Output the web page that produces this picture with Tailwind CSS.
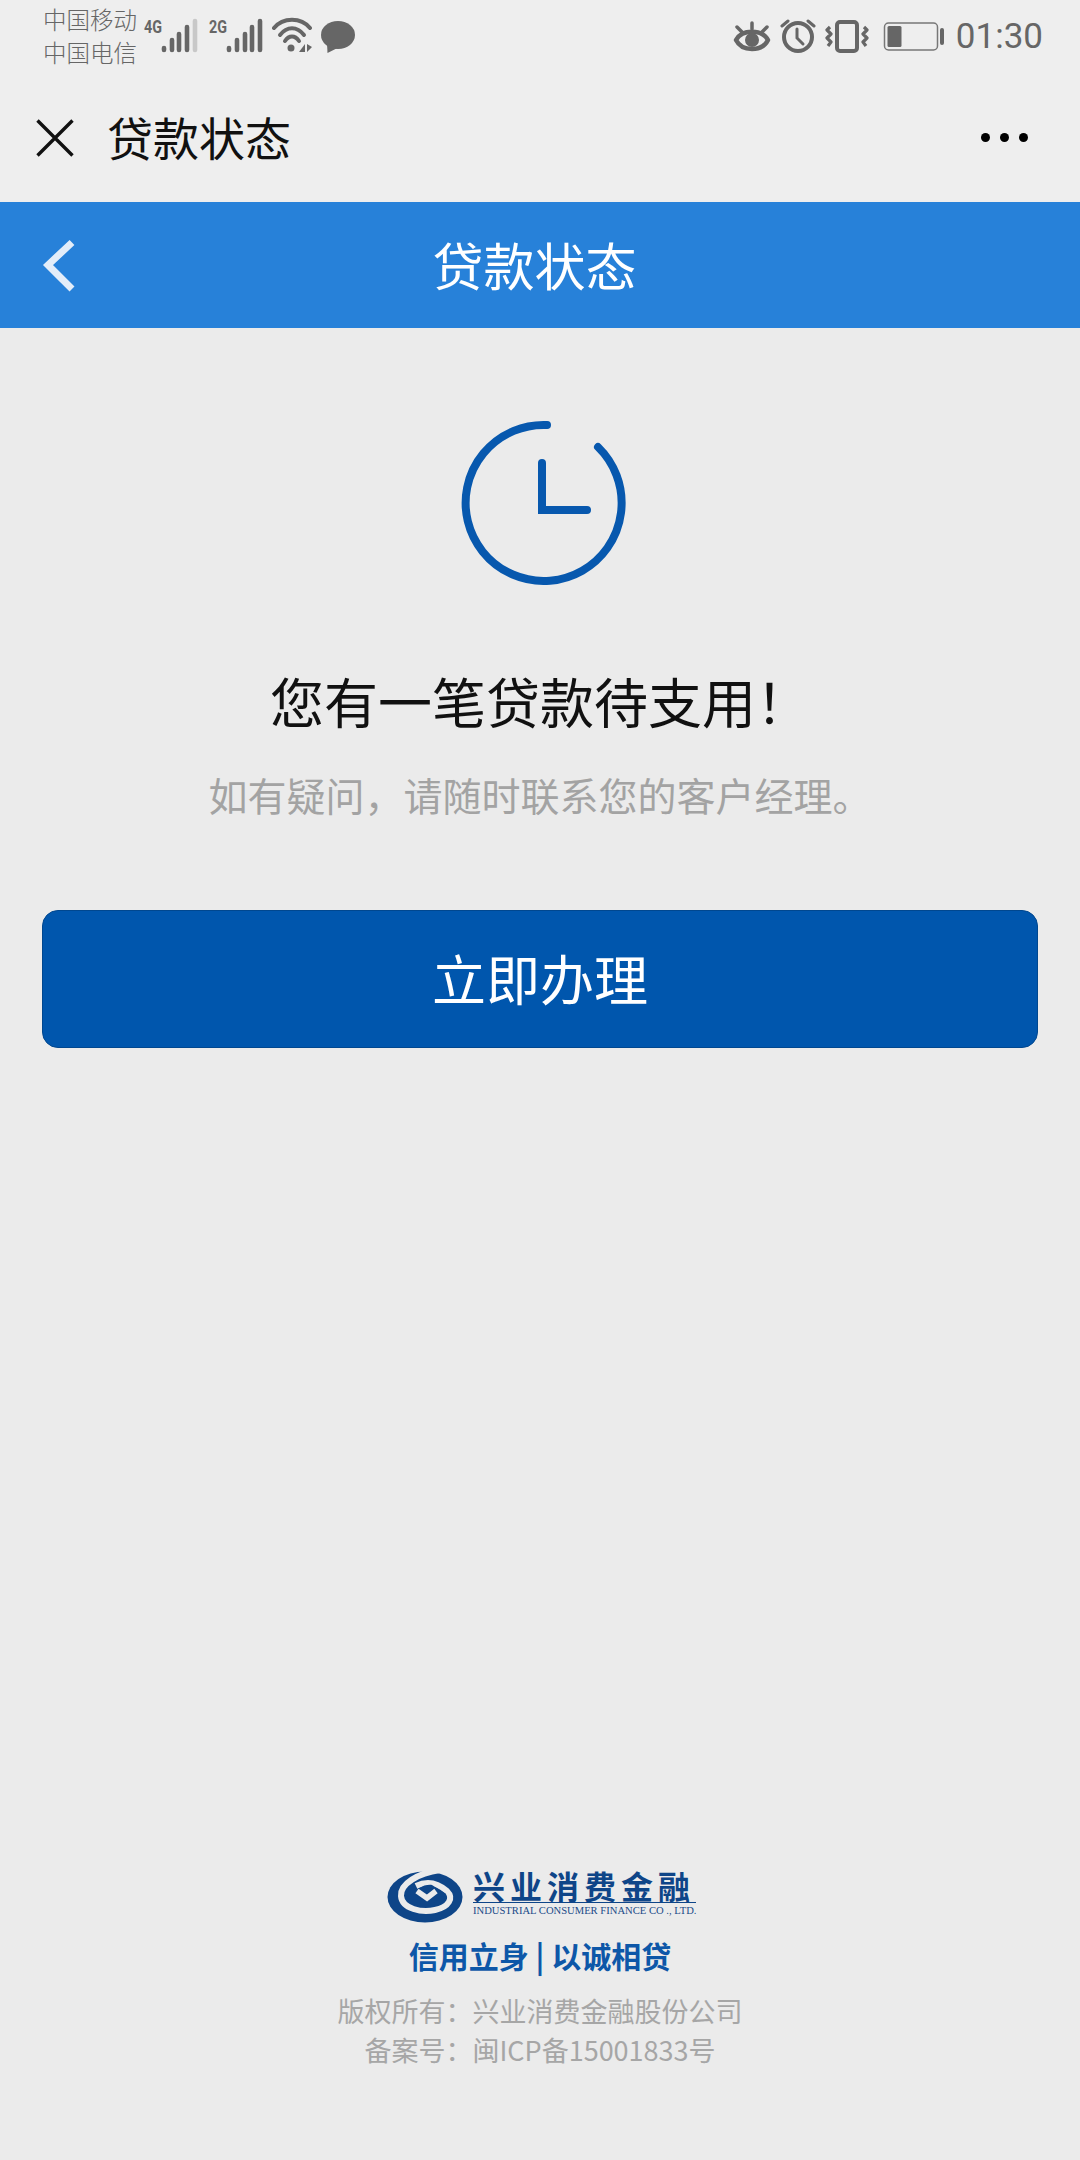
<!DOCTYPE html>
<html lang="zh-CN"><head><meta charset="utf-8">
<script src="https://cdn.jsdelivr.net/npm/@tailwindcss/browser@4"></script>
</head>
<body class="m-0">
<div class="w-[1080px] h-[2160px] flex flex-col bg-[#ebebeb] font-['Noto_Sans_CJK_SC','Noto_Sans',sans-serif] overflow-hidden">
  <header class="h-[202px] bg-[#eeeeee] flex flex-col shrink-0">
    <div class="h-[75px] flex items-start pl-[43px] pr-[37px] text-[#666666]">
      <div class="w-[98px] pt-[3px] text-[23.5px] leading-[33px] font-light text-[#666666] whitespace-nowrap"><div>中国移动</div><div>中国电信</div></div>
      <svg class="w-[60px] h-[60px] ml-[2px] shrink-0" viewBox="0 0 60 60">
        <text x="1" y="33" font-family="Roboto" font-weight="700" font-size="19" fill="#666" textLength="18" lengthAdjust="spacingAndGlyphs">4G</text>
        <g stroke-linecap="round" stroke-width="4.6"><path stroke="#666" d="M21 48v2M29 40v10M36 34v16M44 27v23"/><path stroke="#c8c8c8" d="M52 21v29"/></g>
      </svg>
      <svg class="w-[60px] h-[60px] ml-[5px] shrink-0" viewBox="0 0 60 60">
        <text x="1" y="33" font-family="Roboto" font-weight="700" font-size="19" fill="#666" textLength="18" lengthAdjust="spacingAndGlyphs">2G</text>
        <g stroke="#666" stroke-linecap="round" stroke-width="4.6"><path d="M21 48v2M29 40v10M37 34v16M44 27v23M52 21v29"/></g>
      </svg>
      <svg class="w-[44px] h-[60px] ml-[4px] shrink-0" viewBox="0 0 44 60">
        <g fill="none" stroke="#666" stroke-width="4" stroke-linecap="round"><path d="M2 28C11 17 29 17 38 28"/><path d="M8 35C15 26 25 26 32 35"/><path d="M13 41C17 35 23 35 27 41"/></g>
        <circle cx="19" cy="48" r="3.5" fill="#666"/>
        <path fill="#666" d="M33 44v8h-6zM35 44v8l5-5z"/>
      </svg>
      <svg class="w-[36px] h-[60px] ml-[4px] shrink-0" viewBox="0 0 36 60">
        <ellipse cx="18" cy="35" rx="17" ry="14" fill="#666"/><path fill="#666" d="M7 43l0.5 10 10-5z"/>
      </svg>
      <div class="flex-1"></div>
      <svg class="w-[38px] h-[60px] shrink-0" viewBox="0 0 38 60">
        <path fill="none" stroke="#666" stroke-width="4.5" stroke-linejoin="round" d="M3 40C9 29 29 29 35 40C29 52 9 52 3 40Z"/>
        <circle cx="19" cy="40" r="7" fill="#666"/>
        <path stroke="#666" stroke-width="3.5" stroke-linecap="round" d="M19 23v6M4 27l5 5M34 27l-5 5"/>
      </svg>
      <svg class="w-[36px] h-[60px] ml-[9px] shrink-0" viewBox="0 0 36 60">
        <circle cx="18" cy="37" r="14" fill="none" stroke="#666" stroke-width="4"/>
        <path fill="none" stroke="#666" stroke-width="3" stroke-linecap="round" d="M17 29v9l6 6"/>
        <path stroke="#666" stroke-width="3" stroke-linecap="round" d="M2 26l6-5M34 26l-6-5"/>
      </svg>
      <svg class="w-[44px] h-[60px] ml-[9px] shrink-0" viewBox="0 0 44 60">
        <rect x="12" y="22" width="20" height="29" rx="3" fill="none" stroke="#666" stroke-width="4"/>
        <path fill="none" stroke="#666" stroke-width="3.2" stroke-linejoin="round" d="M5 27l-3 3 4 4-4 4 4 4-3 4M39 27l3 3-4 4 4 4-4 4 3 4"/>
      </svg>
      <svg class="w-[62px] h-[60px] ml-[14px] shrink-0" viewBox="0 0 62 60">
        <rect x="1.5" y="23" width="53" height="27" rx="4" fill="none" stroke="#777" stroke-width="1.5"/>
        <rect x="4.5" y="26" width="14" height="21" rx="1.5" fill="#666"/>
        <rect x="57" y="28" width="4" height="17" rx="2" fill="#666"/>
      </svg>
      <div class="ml-[11px] pt-[15px] font-['Roboto'] text-[35px] leading-[44px] text-[#666666]">01:30</div>
    </div>
    <div class="flex-1 flex items-center pl-[36px] pr-[52px] pb-[2px]">
      <svg class="w-[38px] h-[38px] shrink-0" viewBox="0 0 38 38"><path d="M1.5 1.5L36.5 36.5M36.5 1.5L1.5 36.5" stroke="#111" stroke-width="3.4" fill="none"/></svg>
      <div class="ml-[33px] -mt-[4px] text-[46px] leading-[60px] text-[#111111]">贷款状态</div>
      <div class="flex-1"></div>
      <div class="flex gap-[10px]"><span class="w-[9px] h-[9px] rounded-full bg-black"></span><span class="w-[9px] h-[9px] rounded-full bg-black"></span><span class="w-[9px] h-[9px] rounded-full bg-black"></span></div>
    </div>
  </header>
  <div class="relative h-[126px] bg-[#2781d9] flex items-center justify-center shrink-0 pr-[11px] pb-[3px]">
    <svg class="absolute left-[40px] top-[36px] w-[38px] h-[58px]" viewBox="0 0 38 58"><path d="M32 4.5L8 27l24 24" fill="none" stroke="#e3edf9" stroke-width="7"/></svg>
    <div class="text-[51px] leading-[60px] text-white">贷款状态</div>
  </div>
  <main class="flex-1 flex flex-col items-center">
    <svg class="mt-[89px] ml-[8px] w-[170px] h-[170px] shrink-0" viewBox="0 0 170 170">
      <path d="M88 8A78 78 0 1 0 139 30" fill="none" stroke="#0758ae" stroke-width="8" stroke-linecap="round"/>
      <path d="M83 46V93H128" fill="none" stroke="#0758ae" stroke-width="8" stroke-linecap="round"/>
    </svg>
    <h1 class="mt-[78px] text-[54px] leading-[72px] font-normal text-[#111111]">您有一笔贷款待支用！</h1>
    <p class="mt-[29px] text-[39px] leading-[56px] text-[#a3a3a3]">如有疑问，请随时联系您的客户经理。</p>
    <button class="mt-[88px] pb-[4px] w-[996px] h-[138px] rounded-[16px] bg-[#0056ad] border border-[#00478f] text-white text-[54px] flex items-center justify-center">立即办理</button>
    <footer class="mt-auto pb-[91px] flex flex-col items-center">
      <div class="flex items-start h-[62px]">
        <svg class="w-[90px] h-[62px] shrink-0" viewBox="0 0 90 62">
          <ellipse cx="45" cy="35" rx="37.5" ry="25.5" fill="#0e4588"/>
          <path d="M60 8C38 11 20 22 21 34C22 47 42 51 55 48C69 45 74 36 67 29C60 23 50 17 36 24" fill="none" stroke="#ebebeb" stroke-width="6"/>
          <path d="M36 29L47 37L57 28" fill="none" stroke="#ebebeb" stroke-width="6"/>
          <path d="M28 35C36 27 44 22 52 23L66 32L50 43L42 43Z" fill="#0e4588"/>
          <path d="M37 29L47 36L56 29" fill="none" stroke="#ebebeb" stroke-width="5.5"/>
        </svg>
        <div class="flex flex-col w-[227px] ml-[3px] pt-[6px]">
          <div class="w-[223px] text-[32px] leading-[34px] font-bold text-[#0e4588] border-b border-[#0e4588] whitespace-nowrap tracking-[5px]">兴业消费金融</div>
          <div class="text-[10.6px] leading-[15px] text-[#1a4a88] font-['Liberation_Serif'] whitespace-nowrap">INDUSTRIAL CONSUMER FINANCE CO ., LTD.</div>
        </div>
      </div>
      <div class="mt-[9px] text-[30px] leading-[44px] font-bold text-[#0d57a8]">信用立身 | 以诚相贷</div>
      <div class="mt-[14px] text-[27px] leading-[39px] text-[#a6a6a6] text-center">版权所有：兴业消费金融股份公司</div>
      <div class="text-[27px] leading-[39px] text-[#a6a6a6] text-center">备案号：闽ICP备15001833号</div>
    </footer>
  </main>
</div>
</body></html>
